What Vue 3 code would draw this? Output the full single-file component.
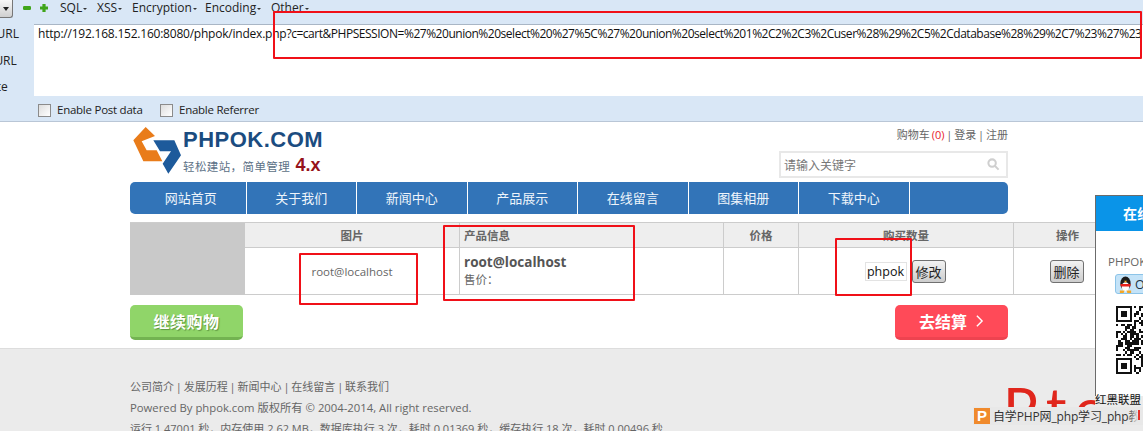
<script setup>
const menus = ['SQL', 'XSS', 'Encryption', 'Encoding', 'Other']
const navs = ['网站首页', '关于我们', '新闻中心', '产品展示', '在线留言', '图集相册', '下载中心']
const urlBase = 'http://192.168.152.160:8080/phpok/index.php'
const urlQuery = '?c=cart&PHPSESSION=%27%20union%20select%20%27%5C%27%20union%20select%201%2C2%2C3%2Cuser%28%29%2C5%2Cdatabase%28%29%2C7%23%27%23'
const footerLinks = ['公司简介', '发展历程', '新闻中心', '在线留言', '联系我们']

const qrCells = []
let seed = 17
const size = 30
const inFinder = (x, y) => x < 8 && (y < 8 || y >= size - 8)
for (let y = 0; y < size; y++) {
  for (let x = 0; x < size; x++) {
    seed = (seed * 1103515245 + 12345) & 0x7fffffff
    if (!inFinder(x, y) && (seed >> 12) % 100 < 52) qrCells.push({ x, y })
  }
}
</script>

<template>
  <div class="page">
    <section class="toolbar">
      <div class="tool-top">
        <button class="drop"><span class="tri"></span></button>
        <svg class="round" viewBox="0 0 10 10"><rect x="0" y="2.500" width="10" height="5" rx="1.500" /></svg>
        <svg class="round plus" viewBox="0 0 10 10"><path d="M3 0h4v3h3v4H7v3H3V7H0V3h3z" /></svg>
        <ul class="menu">
          <li v-for="m in menus" :key="m">{{ m }}<i></i></li>
        </ul>
      </div>
      <div class="tool-mid">
        <div class="labels">
          <span class="lb-a">Load URL</span>
          <span class="lb-b">Split URL</span>
          <span class="lb-c">Execute</span>
        </div>
        <div class="urlbox"><span class="u-base">{{ urlBase }}</span><span class="u-query">{{ urlQuery }}</span></div>
      </div>
      <div class="tool-bot">
        <label><i class="check"></i>Enable Post data</label>
        <label><i class="check"></i>Enable Referrer</label>
      </div>
    </section>

    <main class="wrap">
      <header class="head">
        <div class="logo">
          <svg class="mark" viewBox="0 0 225 180">
            <path fill="#e97c1a" d="M62 15 25 55 55 118h57L95 85H65L50 58 90 42z" />
            <path fill="#1d5a9b" d="M85 55h63l20 45-38 55-17-30 25-37h-33z" />
          </svg>
          <div class="logo-txt">
            <strong>PHPOK.COM</strong>
            <p>轻松建站，简单管理 <b>4.x</b></p>
          </div>
        </div>
        <div class="head-r">
          <div class="userlinks">购物车 <em>(0)</em> | 登录 | 注册</div>
          <div class="search">
            <span>请输入关键字</span>
            <svg viewBox="0 0 14 14"><circle cx="5.500" cy="5.500" r="4" /><path d="m8.500 8.500 4 4" /></svg>
          </div>
        </div>
      </header>

      <nav class="nav">
        <a v-for="n in navs" :key="n">{{ n }}</a>
      </nav>

      <div class="cart">
        <div class="gray"></div>
        <div class="th">图片</div>
        <div class="th left">产品信息</div>
        <div class="th">价格</div>
        <div class="th">购买数量</div>
        <div class="th">操作</div>
        <div class="td">root@localhost</div>
        <div class="td info"><strong>root@localhost</strong><span>售价：</span></div>
        <div class="td"></div>
        <div class="td qty"><span class="input">phpok</span><button class="btn">修改</button></div>
        <div class="td op"><button class="btn">删除</button></div>
      </div>

      <div class="actions">
        <a class="cta green">继续购物</a>
        <a class="cta red">去结算
          <svg viewBox="0 0 10 16"><path d="m2 2 6 6-6 6" /></svg>
        </a>
      </div>
    </main>

    <footer class="foot">
      <p class="f1"><template v-for="(l, i) in footerLinks" :key="l">{{ l }}<template v-if="i < 4"> | </template></template></p>
      <p class="f2">Powered By phpok.com 版权所有 © 2004-2014, All right reserved.</p>
      <p class="f3">运行 1.47001 秒，内存使用 2.62 MB，数据库执行 3 次，耗时 0.01369 秒，缓存执行 18 次，耗时 0.00496 秒</p>
    </footer>

    <aside class="panel">
      <div class="panel-h">在线客服</div>
      <div class="panel-b">
        <div class="p-name">PHPOK 官方客服</div>
        <div class="qq">
          <svg viewBox="0 0 16 18">
            <ellipse cx="8" cy="8" rx="5.500" ry="7.500" fill="#1c1c1c" />
            <ellipse cx="8" cy="11.500" rx="4" ry="5" fill="#fff" />
            <path fill="#e8201c" d="M2.500 8.500h11l-.5 2.500H3z" />
            <path fill="#f5a623" d="M2 15.500h5L6 18H2zM14 15.500H9l1 2.500h4zM6.500 5h3L8 7.500z" />
          </svg>
          <span>Online</span>
        </div>
        <svg class="qr" viewBox="0 0 30 30" shape-rendering="crispEdges">
          <rect v-for="(c, i) in qrCells" :key="i" :x="c.x" :y="c.y" width="1" height="1" />
          <path fill-rule="evenodd" d="M0 0h7v7H0zM1 1v5h5V1zM2 2h3v3H2z" />
          <path fill-rule="evenodd" d="M0 23h7v7H0zM1 24v5h5v-5zM2 25h3v3H2z" />
        </svg>
      </div>
    </aside>

    <div class="pto">Pto</div>
    <div class="union">红黑联盟</div>
    <div class="bar">
      <span class="bar-ico">P</span>
      <span class="bar-txt">自学PHP网_php学习_php教程</span>
      <i class="bar-red"></i>
    </div>

    <div class="note n1"></div>
    <div class="note n2"></div>
    <div class="note n3"></div>
    <div class="note n4"></div>
  </div>
</template>

<style>
html, body { margin: 0; height: 431px; overflow: hidden; background: #fff; }
</style>

<style scoped>
.page {
  position: relative;
  width: 1143px;
  height: 431px;
  overflow: hidden;
  font-family: "Open Sans", "Noto Sans CJK SC", sans-serif;
  font-size: 12px;
  color: #666;
  background: #fff;
}
p { margin: 0; }

.toolbar {
  height: 122px;
  box-sizing: border-box;
  background: #d9e7f6;
  border-bottom: 1px solid #b9c6d6;
  color: #222;
}
.tool-top { height: 24px; display: flex; align-items: flex-start; }
.drop {
  width: 13px; height: 18px; padding: 0; border: 1px solid #777; border-top: 0; border-left: 0;
  border-radius: 0 0 3px 0; background: linear-gradient(#f8f8f8, #cfcfcf);
  display: flex; align-items: center; justify-content: center;
}
.tri { border: 3px solid transparent; border-top: 4px solid #222; border-bottom: 0; }
.round { width: 8px; height: 8px; margin: 4px 0 0 10px; fill: #3fa51a; flex: none; }
.round.plus { margin-left: 9px; }
.menu { list-style: none; margin: 0 0 0 12px; padding: 0; display: flex; font-size: 12px; line-height: 16px; color: #222; }
.menu li { display: flex; align-items: center; white-space: nowrap; }
.menu li:nth-child(1) { width: 37px; }
.menu li:nth-child(2) { width: 35px; }
.menu li:nth-child(3) { width: 73px; }
.menu li:nth-child(4) { width: 66px; }
.menu i { margin: 1px 0 0 1px; border: 2px solid transparent; border-top: 2px solid #333; border-bottom: 0; }

.tool-mid { display: flex; height: 72px; }
.labels { width: 34px; flex: none; overflow: hidden; padding-top: 2px; box-sizing: border-box; }
.labels span { display: block; white-space: nowrap; line-height: 16px; height: 26.500px; }
.lb-a { margin-left: -34px; }
.lb-b { margin-left: -33px; }
.lb-c { margin-left: -36px; }
.urlbox {
  flex: 1; min-width: 0; box-sizing: border-box; background: #fff; border-top: 1px solid #a9b6c5;
  padding: 1px 0 0 4px; font-size: 12px; line-height: 16px; white-space: nowrap; overflow: hidden; color: #111;
}
.u-base { letter-spacing: -0.22px; }
.u-query { letter-spacing: -0.47px; }
.tool-bot { display: flex; padding: 7px 0 0 38px; color: #222; font-size: 11.500px; letter-spacing: -0.25px; }
.tool-bot label { display: flex; align-items: center; line-height: 14px; }
.tool-bot label:first-child { width: 122px; }
.check { width: 11px; height: 11px; border: 1px solid #8b8b8b; background: linear-gradient(135deg, #ddd, #fff); margin-right: 6px; }

.wrap { width: 878px; margin-left: 130px; }
.head { height: 60px; display: flex; justify-content: space-between; }
.logo { display: flex; height: 60px; margin-left: -5px; }
.mark { width: 75px; height: 60px; flex: none; }
.logo-txt { margin: 8px 0 0 -17px; }
.logo-txt strong { display: block; font: 700 22px/20px "Liberation Sans", sans-serif; letter-spacing: 0.5px; color: #1b4c80; }
.logo-txt p { font-size: 11.500px; line-height: 20px; color: #5d7186; margin-top: 5px; white-space: nowrap; letter-spacing: 0.4px; }
.logo-txt b { color: #96131b; font: 700 18px/20px "Liberation Sans", sans-serif; letter-spacing: 0; margin-left: 2px; }
.head-r { width: 229px; display: flex; flex-direction: column; align-items: flex-end; }
.userlinks { line-height: 16px; margin-top: 5px; font-size: 11px; word-spacing: -1px; }
.userlinks em { font-style: normal; color: #e8222c; }
.search {
  width: 229px; height: 27px; box-sizing: border-box; margin-top: 8px; border: 2px solid #e8e8e8;
  display: flex; align-items: center; justify-content: space-between; padding: 0 6px 0 3px; color: #777;
}
.search svg { width: 13px; height: 13px; fill: none; stroke: #cfcfcf; stroke-width: 2.200; }

.nav { height: 32px; padding-left: 6px; box-sizing: border-box; background: #3274b8; border-radius: 5px; display: flex; }
.nav a { width: 110.500px; box-sizing: border-box; border-right: 1px solid #fff; text-align: center; color: #eef4fb; font-size: 13px; line-height: 32px; }

.cart {
  margin-top: 8px; width: 992px; display: grid;
  grid-template-columns: 115px 215px 264px 75px 215px 108px;
  grid-template-rows: 25px 47px;
  border-top: 1px solid #ccc;
}
.gray { grid-row: 1 / span 2; background: #c9c9c9; }
.th { background: #eee; border-bottom: 1px solid #ccc; border-right: 1px solid #ccc; text-align: center; line-height: 26px; font-weight: 700; color: #666; font-size: 11.500px; }
.th.left { text-align: left; padding-left: 4px; }
.td { border-bottom: 1px solid #ccc; border-right: 1px solid #ccc; display: flex; align-items: center; justify-content: center; color: #666; font-size: 11.500px; }
.info { flex-direction: column; align-items: flex-start; padding-left: 4px; line-height: 18px; }
.info strong { font-size: 13.500px; color: #555; }
.qty { gap: 5px; padding-right: 2px; }
.op { padding-right: 2px; }
.input { width: 42px; height: 19px; box-sizing: border-box; border: 1px solid #e3e3e3; background: #fff; color: #111; font-size: 12.500px; line-height: 17px; text-align: center; }
.btn {
  width: 34px; height: 23px; padding: 0; border: 1px solid #707070; border-radius: 3px;
  background: linear-gradient(#f2f2f2, #cdcdcd); color: #222; font: 13px "Noto Sans CJK SC", sans-serif;
}

.actions { margin-top: 10px; display: flex; justify-content: space-between; }
.cta {
  width: 113px; height: 35px; box-sizing: border-box; border-radius: 5px; border-bottom: 3px solid;
  display: flex; align-items: center; justify-content: center; color: #fff; font-weight: 700; font-size: 16px;
}
.green { background: #90d569; border-color: #73b351; text-shadow: 1px 1px 1px #5d9440; letter-spacing: 0.5px; }
.red { background: #ff4a58; border-color: #ee4350; gap: 8px; }
.red svg { width: 9px; height: 14px; fill: none; stroke: #fff; stroke-width: 1.600; }

.foot {
  margin-top: 8px; padding: 27px 0 0 130px; height: 120px; box-sizing: border-box;
  border-top: 1px solid #ddd; background: #ebebeb; color: #666; line-height: 21px; font-size: 11px; white-space: nowrap;
}
.f1 { word-spacing: -1px; }
.f2 { font-size: 11.300px; }

.panel { position: absolute; left: 1095px; top: 195px; width: 200px; height: 201px; border-left: 1px solid #6b6b6b; border-top: 1px solid #6b6b6b; background: #fff; box-sizing: border-box; }
.panel-h { height: 35px; background: #0a94e8; color: #fff; line-height: 35px; font-weight: 700; font-size: 14px; padding-left: 27px; }
.panel-b { padding: 23px 0 0 12px; }
.p-name { font-size: 11.500px; line-height: 16px; color: #666; white-space: nowrap; }
.qq { margin: 4px 0 0 7px; width: 80px; height: 20px; box-sizing: border-box; border: 1px solid #8cc4e8; border-radius: 3px; background: #c4e3f8; display: flex; align-items: center; gap: 2px; padding-left: 2px; font-size: 12.500px; color: #234; }
.qq svg { width: 15px; height: 17px; flex: none; }
.qr { display: block; width: 68px; height: 68px; margin: 12px 0 0 8px; fill: #111; }

.pto { position: absolute; left: 1003px; top: 378px; width: 92px; height: 32px; overflow: hidden; font: 400 58px/60px "Lato", sans-serif; letter-spacing: 8px; color: #e0261c; }
.union { position: absolute; left: 1095px; top: 392px; font-size: 11.500px; line-height: 16px; color: #111; white-space: nowrap; }
.bar { position: absolute; left: 973px; top: 407px; width: 170px; height: 18px; background: #e8e8e8; display: flex; align-items: center; overflow: hidden; }
.bar::after { content: ""; position: absolute; left: 155px; top: 0; width: 15px; height: 18px; background: linear-gradient(90deg, rgba(232,232,232,0), #e8e8e8 70%); }
.bar-ico { width: 16px; height: 16px; margin-left: 1px; background: #f08a2c; color: #fff; font: 700 15px/16px "Liberation Sans", sans-serif; text-align: center; flex: none; }
.bar-txt { margin-left: 3px; font-size: 12px; letter-spacing: -0.15px; color: #333; white-space: nowrap; }
.bar-red { position: absolute; z-index: 1; left: 165px; top: 3px; width: 2px; height: 10px; background: #e5322a; }

.note { position: absolute; box-sizing: border-box; border: 2px solid #f01018; border-radius: 1px; }
.n1 { left: 273px; top: 11px; width: 869px; height: 48px; }
.n2 { left: 299px; top: 253px; width: 119px; height: 52px; }
.n3 { left: 443px; top: 225px; width: 192px; height: 76px; }
.n4 { left: 835px; top: 238px; width: 77px; height: 58px; }
</style>
